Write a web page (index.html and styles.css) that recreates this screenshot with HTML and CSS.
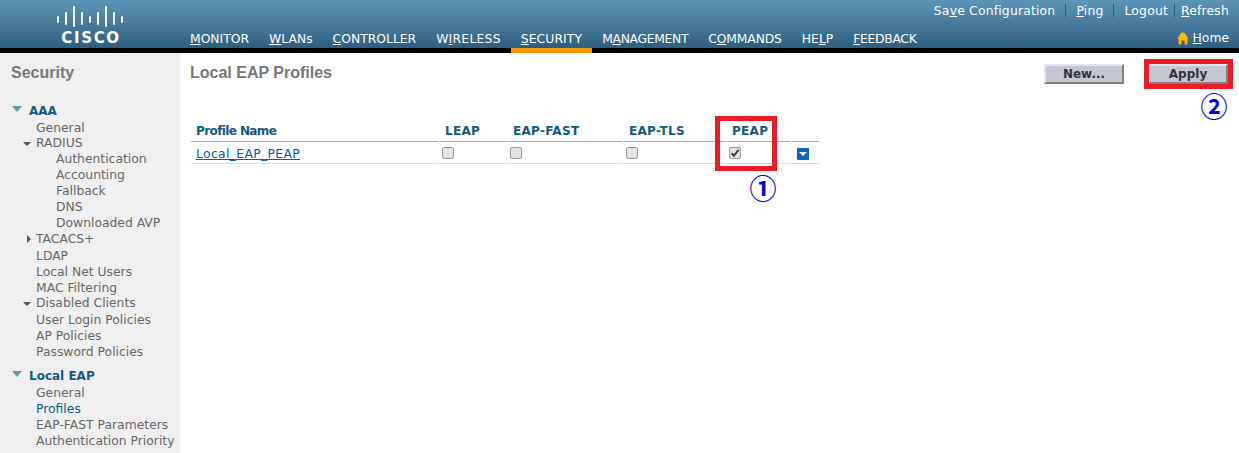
FILE: index.html
```html
<!DOCTYPE html>
<html lang="en">
<head>
  <meta charset="UTF-8">
  <title>Local EAP Profiles</title>
  <link rel="stylesheet" href="styles.css">
</head>
<body>
  <div class="header">
    <div class="logo">
      <svg class="logo-bars" width="70" height="22" viewBox="0 0 70 22">
        <g fill="none" stroke="#fff" stroke-width="2" stroke-linecap="round">
          <path d="M2 12v5M10 8v11M18 2v19M26 8v11M34 12v5M42 8v11M50 2v19M58 8v11M66 12v5"/>
        </g>
      </svg>
      <div class="logo-text">CISCO</div>
    </div>
    <div class="header-right">
      <div class="toplinks">
        <a>Sa<u>v</u>e Configuration</a><span class="sep wide"></span>
        <a><u>P</u>ing</a><span class="sep wide"></span>
        <a>Lo<u>g</u>out</a><span class="sep"></span>
        <a><u>R</u>efresh</a>
      </div>
      <div class="nav">
        <a class="nav-item"><u>M</u>ONITOR</a>
        <a class="nav-item"><u>W</u>LANs</a>
        <a class="nav-item"><u>C</u>ONTROLLER</a>
        <a class="nav-item wider">W<u>I</u>RELESS</a>
        <a class="nav-item active"><u>S</u>ECURITY</a>
        <a class="nav-item tighter">M<u>A</u>NAGEMENT</a>
        <a class="nav-item tight">C<u>O</u>MMANDS</a>
        <a class="nav-item">HE<u>L</u>P</a>
        <a class="nav-item tighter"><u>F</u>EEDBACK</a>
        <a class="home">
          <svg width="12" height="13" viewBox="0 0 12 13"><path d="M6 .5C8 .5 9 2 9.5 3.5L11.5 6.5 10.5 7V12.5H7.5V8.5H4.5V12.5H1.5V7L.5 6.5 2.5 3.5C3 2 4 .5 6 .5Z" fill="#f5b800"/></svg>
          <span><u>H</u>ome</span>
        </a>
      </div>
    </div>
  </div>

  <div class="page">
    <div class="sidebar">
      <div class="side-title">Security</div>

      <div class="group"><span class="arrow-big"></span>AAA</div>
      <div class="item">General</div>
      <div class="item parent"><span class="arrow-down"></span>RADIUS</div>
      <div class="item sub">Authentication</div>
      <div class="item sub">Accounting</div>
      <div class="item sub">Fallback</div>
      <div class="item sub">DNS</div>
      <div class="item sub">Downloaded AVP</div>
      <div class="item parent"><span class="arrow-right"></span>TACACS+</div>
      <div class="item">LDAP</div>
      <div class="item">Local Net Users</div>
      <div class="item">MAC Filtering</div>
      <div class="item parent"><span class="arrow-down"></span>Disabled Clients</div>
      <div class="item">User Login Policies</div>
      <div class="item">AP Policies</div>
      <div class="item">Password Policies</div>

      <div class="group second"><span class="arrow-big"></span>Local EAP</div>
      <div class="item">General</div>
      <div class="item current">Profiles</div>
      <div class="item">EAP-FAST Parameters</div>
      <div class="item">Authentication Priority</div>
    </div>

    <div class="content">
      <div class="content-head">
        <div class="content-title">Local EAP Profiles</div>
        <div class="buttons">
          <button class="btn">New...</button>
          <button class="btn">Apply</button>
        </div>
      </div>

      <table class="profiles">
        <tr>
          <th class="col-name">Profile Name</th>
          <th class="col-leap">LEAP</th>
          <th class="col-fast">EAP-FAST</th>
          <th class="col-tls">EAP-TLS</th>
          <th class="col-peap">PEAP</th>
          <th class="col-menu"></th>
        </tr>
        <tr>
          <td><a class="profile-link">Local_EAP_PEAP</a></td>
          <td><span class="check"></span></td>
          <td><span class="check"></span></td>
          <td><span class="check"></span></td>
          <td>
            <span class="check">
              <svg width="10" height="10" viewBox="0 0 10 10"><path d="M1.5 5.2 4 7.8 8.6 1.8" fill="none" stroke="#3a3a3a" stroke-width="2"/></svg>
            </span>
          </td>
          <td><span class="menu-btn"></span></td>
        </tr>
      </table>
    </div>
  </div>

  <div class="mark mark-peap"></div>
  <div class="mark mark-apply"></div>
  <div class="num num-one">①</div>
  <div class="num num-two">②</div>
</body>
</html>
```

FILE: styles.css
```css
html, body {
  margin: 0;
  padding: 0;
}
body {
  position: relative;
  width: 1239px;
  height: 453px;
  overflow: hidden;
  background-color: #fff;
  font-family: "DejaVu Sans", Verdana, sans-serif;
  font-size: 12.35px;
  color: #666;
}

/* header */
.header {
  display: flex;
  height: 48px;
  border-bottom: 5px solid #000;
  background: linear-gradient(#5b95ba, #2f5f7f);
  color: #fff;
}
.logo {
  width: 190px;
  flex: none;
  padding: 5px 0 0 56px;
  box-sizing: border-box;
}
.logo-bars {
  display: block;
}
.logo-text {
  width: 70px;
  margin-top: 4px;
  font-size: 15px;
  line-height: 14px;
  font-weight: bold;
  letter-spacing: 1.7px;
  text-align: center;
}
.header-right {
  flex: 1;
  display: flex;
  flex-direction: column;
  justify-content: space-between;
}
.toplinks {
  display: flex;
  justify-content: flex-end;
  align-items: center;
  height: 21px;
  padding-right: 10px;
  letter-spacing: .2px;
}
.sep {
  width: 1px;
  height: 13px;
  margin: 0 6px;
  background-color: #2b5876;
}
.sep.wide {
  margin: 0 10px;
}
.nav {
  display: flex;
  align-items: flex-end;
  height: 27px;
}
.nav-item {
  height: 18px;
  margin-right: 20px;
  line-height: 18px;
}
.nav-item.wider {
  letter-spacing: .25px;
}
.nav-item.tight {
  letter-spacing: -.15px;
}
.nav-item.tighter {
  letter-spacing: -.3px;
}
.nav-item.active {
  margin: 0 10px 0 -10px;
  padding: 0 10px;
  box-shadow: 0 5px 0 #f90;
  letter-spacing: .1px;
}
.home {
  display: flex;
  align-items: center;
  gap: 4px;
  height: 20px;
  margin-left: auto;
  padding-right: 10px;
}

/* left menu */
.page {
  display: flex;
  height: 400px;
}
.sidebar {
  width: 180px;
  flex: none;
  box-sizing: border-box;
  padding: 11px 0 0 11px;
  background-color: #efefef;
}
.side-title {
  margin-bottom: 20px;
  font-family: "Liberation Sans", Arial, sans-serif;
  font-size: 16px;
  line-height: 18px;
  font-weight: bold;
  color: #777;
}
.group {
  display: flex;
  align-items: center;
  height: 17px;
  font-size: 12px;
  font-weight: bold;
  color: #135a7f;
}
.group.second {
  margin-top: 8px;
}
.arrow-big {
  width: 0;
  height: 0;
  margin-right: 7px;
  border-left: 5px solid transparent;
  border-right: 5px solid transparent;
  border-top: 6px solid #5f9ea0;
  margin-top: -3px;
  margin-left: 1px;
}
.item {
  position: relative;
  height: 16px;
  padding-left: 25px;
  line-height: 18px;
  white-space: nowrap;
}
.item.sub,
.item.parent {
  line-height: 16px;
}
.item.sub {
  padding-left: 45px;
}
.item.current {
  color: #135a7f;
}
.arrow-down {
  position: absolute;
  left: 12px;
  top: 7px;
  border-left: 4px solid transparent;
  border-right: 4px solid transparent;
  border-top: 4px solid #555;
}
.arrow-right {
  position: absolute;
  left: 16px;
  top: 4px;
  border-top: 4px solid transparent;
  border-bottom: 4px solid transparent;
  border-left: 4px solid #555;
}

/* profiles table */
.content {
  flex: 1;
  padding: 11px 11px 0 10px;
}
.content-head {
  display: flex;
  justify-content: space-between;
}
.content-title {
  font-family: "Liberation Sans", Arial, sans-serif;
  font-size: 16px;
  line-height: 18px;
  font-weight: bold;
  color: #777;
}
.buttons {
  display: flex;
  gap: 24px;
}
.btn {
  width: 80px;
  height: 20px;
  padding: 0;
  border: 2px solid;
  border-color: #e4e4e8 #808080 #808080 #e4e4e8;
  background-color: #c4c6d4;
  font-family: "DejaVu Sans", Verdana, sans-serif;
  font-size: 12px;
  font-weight: bold;
  color: #333;
}
.profiles {
  margin: 36px 0 0 0;
  border-collapse: separate;
  border-spacing: 1px 0;
  table-layout: fixed;
  width: 630px;
}
.profiles th {
  height: 22px;
  padding: 1px 0 0 5px;
  box-sizing: border-box;
  border-bottom: 1px solid #aaa;
  text-align: left;
  font-size: 12px;
  font-weight: bold;
  letter-spacing: .3px;
  color: #135a7f;
  white-space: nowrap;
}
.profiles th.col-name {
  letter-spacing: -.6px;
}
.profiles td {
  height: 22px;
  padding: 2px 0 0 2px;
  box-sizing: border-box;
  border-bottom: 1px solid #ddd;
}
.profiles td:first-child {
  padding-left: 5px;
}
.col-name { width: 248px; }
.col-leap { width: 67px; }
.col-fast { width: 115px; }
.col-tls { width: 102px; }
.col-peap { width: 64px; }
.profile-link {
  color: #0a5cb8;
  letter-spacing: .35px;
  text-decoration: underline;
}
.check {
  display: block;
  width: 10px;
  height: 10px;
  margin-bottom: 2px;
  border: 1px solid #9a9a9a;
  border-radius: 2px;
  background-color: #e2e2e2;
}
.check svg {
  display: block;
}
.menu-btn {
  display: block;
  position: relative;
  width: 12px;
  height: 12px;
  margin-left: 3px;
  border-radius: 1px;
  background-color: #0a63c4;
}
.menu-btn::after {
  content: "";
  position: absolute;
  left: 2px;
  top: 4px;
  border-left: 4px solid transparent;
  border-right: 4px solid transparent;
  border-top: 4px solid #fff;
}

/* annotations over the screenshot */
.mark {
  position: absolute;
  box-sizing: border-box;
  border: 5px solid #ed1c24;
}
.mark-peap {
  left: 715px;
  top: 116px;
  width: 62px;
  height: 55px;
}
.mark-apply {
  left: 1144px;
  top: 59px;
  width: 89px;
  height: 30px;
}
.num {
  position: absolute;
  width: 28px;
  font-family: "Noto Sans CJK SC", "DejaVu Sans", sans-serif;
  font-size: 27px;
  line-height: 28px;
  font-weight: bold;
  text-align: center;
  color: #0000e0;
}
.num-one {
  left: 749px;
  top: 174px;
}
.num-two {
  left: 1200px;
  top: 92px;
}
```
